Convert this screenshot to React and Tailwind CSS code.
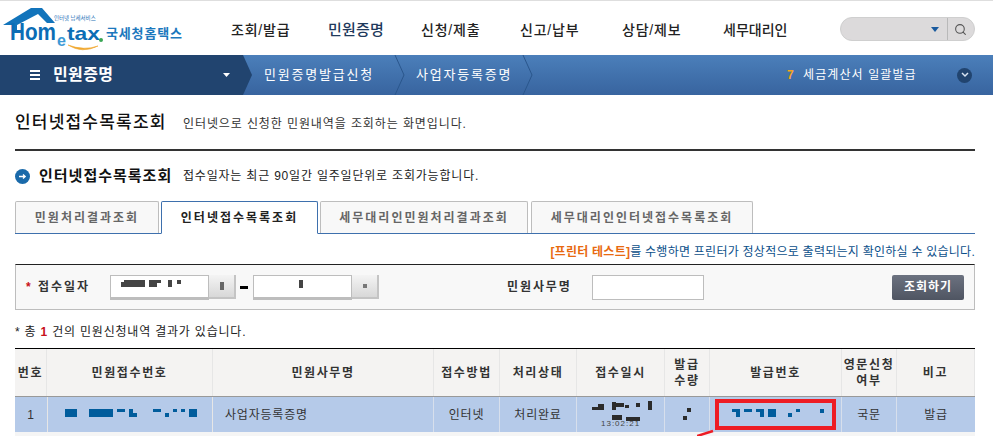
import React from "react";
import { Search } from "lucide-react";

const menus = [
  { label: "조회/발급", width: "w-[97px]", cls: "text-[14px] tracking-[0.8px] text-[#222]" },
  { label: "민원증명", width: "w-[93px]", cls: "text-[15px] tracking-[0.2px] text-[#1f3a5c]" },
  { label: "신청/제출", width: "w-[99px]", cls: "text-[14px] tracking-[0.8px] text-[#222]" },
  { label: "신고/납부", width: "w-[102px]", cls: "text-[14px] tracking-[0.8px] text-[#222]" },
  { label: "상담/제보", width: "w-[101px]", cls: "text-[14px] tracking-[0.8px] text-[#222]" },
  { label: "세무대리인", width: "w-[80px]", cls: "text-[14px] text-[#222]" },
];

const tabs = [
  { label: "민원처리결과조회", width: "w-[144px]" },
  { label: "인터넷접수목록조회", width: "w-[157px]", active: true },
  { label: "세무대리인민원처리결과조회", width: "w-[208px]" },
  { label: "세무대리인인터넷접수목록조회", width: "w-[222px] ml-[1px]" },
];

const headers = [
  ["번호"],
  ["민원접수번호"],
  ["민원사무명"],
  ["접수방법"],
  ["처리상태"],
  ["접수일시"],
  ["발급", "수량"],
  ["발급번호"],
  ["영문신청", "여부"],
  ["비고"],
];

const gridCols =
  "grid grid-cols-[32px_166px_221px_66px_77px_88px_45px_132px_55px_78px]";

// 가려진 번호 부분 (모자이크)
const Mosaic = ({ width, height, fill, blocks, children }) => (
  <svg width={width} height={height} className="block">
    {blocks.map(([x, y, w, h], i) => (
      <rect key={i} x={x} y={y} width={w} height={h} fill={fill} />
    ))}
    {children}
  </svg>
);

const Logo = () => (
  <svg width="190" height="54" className="block shrink-0">
    <path d="M31 7h11l13 15h-8l-9-9-21 11v7h-5v-7H3z" fill="#1274bb" />
    <text x="10" y="39" fontSize="23" fontWeight="700" fill="#0b6db5" fontFamily="Liberation Sans" textLength="46" lengthAdjust="spacingAndGlyphs">Hom</text>
    <text x="57" y="45" fontSize="16" fontWeight="700" fill="#3d9ad6" fontFamily="Liberation Sans">e</text>
    <text x="67" y="39" fontSize="19" fontWeight="700" fill="#0b6db5" fontFamily="Liberation Sans" textLength="33" lengthAdjust="spacingAndGlyphs">tax</text>
    <circle cx="101" cy="39" r="2" fill="#3aa655" />
    <path d="M68 44q14 9 30 1q-14 5-30-1z" fill="#f0a830" stroke="#f0a830" strokeWidth="0.6" />
    <text x="54" y="19" fontSize="5.5" fill="#2b74b8" fontFamily="Noto Sans CJK KR">인터넷 납세서비스</text>
    <text x="106" y="37" fontSize="13" fontWeight="700" fill="#1c78bd" fontFamily="Noto Sans CJK KR" textLength="76">국세청홈택스</text>
  </svg>
);

const Crumb = ({ label, width }) => (
  <div className={`flex items-center justify-between h-full ${width}`}>
    <span className="text-[13px] text-white tracking-[1.8px] whitespace-nowrap">{label}</span>
    <svg width="11" height="40" className="shrink-0">
      <path d="M1 0l9 20-9 20" fill="none" stroke="#2a568c" strokeWidth="1" />
    </svg>
  </div>
);

const CalendarButton = ({ children }) => (
  <div className="w-[27px] h-[24px] border-b-2 border-r-2 border-[#c4c4c4] bg-gradient-to-b from-[#f4f4f4] to-[#d8d8d8] flex items-center justify-center">
    {children}
  </div>
);

const App = () => {
  return (
    <div className="w-[993px] h-[436px] overflow-hidden bg-white text-[12px] text-[#222] font-['Liberation_Sans','Noto_Sans_CJK_KR',sans-serif]">
      <header className="h-[55px] flex items-center border-t border-[#dedede]">
        <Logo />
        <nav className="flex items-center ml-[41px] pt-[5px]">
          {menus.map((menu) => (
            <div
              key={menu.label}
              className={`${menu.width} ${menu.cls} font-medium whitespace-nowrap`}
            >
              {menu.label}
            </div>
          ))}
        </nav>
        <div className="ml-[37px] mt-[2px] w-[135px] h-[24px] flex items-center rounded-full bg-[#dcdadb] border border-[#cfcfcf]">
          <div className="flex-1 flex justify-end pr-[3px]">
            <svg width="8" height="5">
              <path d="M0 0h8l-4 5z" fill="#1a5a9e" />
            </svg>
          </div>
          <div className="w-[27px] h-full ml-[5px] border-l border-[#b9b9b9] flex items-center justify-center pr-[2px]">
            <Search size={13} strokeWidth={2} className="text-[#555]" />
          </div>
        </div>
      </header>

      <div className="h-[40px] flex items-center bg-gradient-to-b from-[#4b7fba] to-[#38649f]">
        <div className="w-[243px] h-full bg-[#21446f] flex items-center pl-[30px] pr-[13px]">
          <div className="w-[10px] flex flex-col gap-[2px]">
            <div className="h-[2px] bg-white" />
            <div className="h-[2px] bg-white" />
            <div className="h-[2px] bg-white" />
          </div>
          <span className="ml-[13px] text-[16px] font-bold text-white tracking-[0.4px]">민원증명</span>
          <svg width="7" height="4" className="ml-auto">
            <path d="M0 0h7l-3.5 4z" fill="#fff" />
          </svg>
        </div>
        <svg width="10" height="40" className="shrink-0">
          <path d="M0 0l9 20-9 20z" fill="#21446f" />
        </svg>
        <div className="ml-[11px]">
          <Crumb label="민원증명발급신청" width="w-[141px]" />
        </div>
        <div className="ml-[11px]">
          <Crumb label="사업자등록증명" width="w-[117px]" />
        </div>
        <span className="ml-[254px] w-[7px] text-[12px] font-bold text-[#f7a51c]">7</span>
        <span className="ml-[9px] w-[112px] text-[12px] text-white tracking-[1.1px] whitespace-nowrap">세금계산서 일괄발급</span>
        <div className="ml-[42px] w-[15px] h-[15px] rounded-full bg-[#21446f] flex items-center justify-center">
          <svg width="8" height="6">
            <path d="M1 1l3 3 3-3" fill="none" stroke="#d7e3f2" strokeWidth="1.5" />
          </svg>
        </div>
      </div>

      <main className="w-[975px] pl-[15px]">
        <div className="h-[56px] pt-[16px] flex items-start border-b-2 border-[#333]">
          <h1 className="text-[17px] leading-[24px] font-medium text-[#111] tracking-[1.2px] w-[168px] whitespace-nowrap">
            인터넷접수목록조회
          </h1>
          <p className="leading-[26px] text-[#333] tracking-[0.9px] whitespace-nowrap">
            인터넷으로 신청한 민원내역을 조회하는 화면입니다.
          </p>
        </div>

        <div className="h-[50px] flex items-center">
          <svg width="15" height="15" className="shrink-0">
            <circle cx="7.5" cy="7.5" r="7.5" fill="#1a6aaa" />
            <path d="M4 7.5h6M8 5.5l2.2 2-2.2 2" fill="none" stroke="#fff" strokeWidth="1.3" />
          </svg>
          <h2 className="ml-[9px] w-[144px] text-[15px] font-bold text-[#111] tracking-[1px] whitespace-nowrap">
            인터넷접수목록조회
          </h2>
          <p className="text-[#222] tracking-[0.8px] whitespace-nowrap">
            접수일자는 최근 90일간 일주일단위로 조회가능합니다.
          </p>
        </div>

        <div className="h-[33px] flex gap-[2px] border-b border-[#3e70ad]">
          {tabs.map((tab) => (
            <div
              key={tab.label}
              className={`${tab.width} rounded-t-[2px] border flex items-center justify-center font-bold tracking-[2px] whitespace-nowrap ${
                tab.active
                  ? "h-[33px] bg-white border-[#3e70ad] border-b-white text-[#222]"
                  : "h-[32px] bg-[#f8f8f8] border-[#bdbdbd] border-b-0 text-[#666]"
              }`}
            >
              {tab.label}
            </div>
          ))}
        </div>

        <p className="h-[30px] pt-[9px] leading-[18px] text-right text-[#0b4f8a] tracking-[0.25px] whitespace-nowrap">
          <span className="font-bold text-[#e8690f]">[프린터 테스트]</span>를 수행하면 프린터가 정상적으로 출력되는지 확인하실 수 있습니다.
        </p>

        <div className="h-[46px] flex items-center bg-[#f8f8f8] border border-[#bdbdbd] border-t-[#222] pl-[10px] pr-[10px]">
          <span className="w-[12px] text-[#c8101a] font-bold">*</span>
          <span className="w-[72px] font-bold tracking-[2px] text-[#333]">접수일자</span>
          <div className="w-[99px] h-[25px] bg-white border border-[#bdbdbd] border-b-[3px] pl-[9px] pt-[4px]">
            <Mosaic width="66" height="9" fill="#444" blocks={[[1, 2, 10, 5], [4, 0, 21, 7], [29, 0, 8, 7], [29, 0, 12, 3], [48, 0, 4, 7], [57, 0, 4, 4]]} />
          </div>
          <CalendarButton>
            <div className="w-[4px] h-[8px] bg-[#666]" />
          </CalendarButton>
          <div className="w-[8px] h-[3px] bg-black ml-[4px] mr-[5px]" />
          <div className="w-[99px] h-[25px] bg-white border border-[#bdbdbd] border-b-[3px] pt-[4px] pl-[45px]">
            <div className="w-[4px] h-[8px] bg-[#444]" />
          </div>
          <CalendarButton>
            <div className="w-[4px] h-[4px] bg-[#777]" />
          </CalendarButton>
          <span className="ml-[128px] w-[85px] font-bold tracking-[1.9px] text-[#333] whitespace-nowrap">민원사무명</span>
          <div className="w-[112px] h-[25px] bg-white border border-[#bdbdbd]" />
          <button className="ml-auto w-[72px] h-[25px] rounded-[2px] bg-gradient-to-b from-[#6c7280] to-[#4f5562] text-white font-bold tracking-[1px]">
            조회하기
          </button>
        </div>

        <p className="h-[38px] pt-[13px] leading-[18px] text-[#222] tracking-[0.8px]">
          * 총 <span className="font-bold text-[#c8101a]">1</span> 건의 민원신청내역 결과가 있습니다.
        </p>

        <div className="relative border-t border-black">
          <div className={`${gridCols} h-[48px] bg-[#f4f3f2] border-b border-[#999]`}>
            {headers.map((lines) => (
              <div
                key={lines[0]}
                className="flex flex-col items-center justify-center border-r border-[#e6e6e6] font-bold text-[#333] tracking-[1.6px] leading-[16px]"
              >
                {lines.map((line) => (
                  <span key={line} className="whitespace-nowrap">{line}</span>
                ))}
              </div>
            ))}
          </div>

          <div className={`${gridCols} h-[35px] bg-[#b5cae9] text-[#333] tracking-[0.8px]`}>
            <div className="flex items-center justify-center">1</div>
            <div className="flex items-center pl-[16px] pb-[2px] border-x border-[#e6e6e6]">
              <Mosaic
                width="134"
                height="9"
                fill="#005c9c"
                blocks={[[1, 0, 12, 8], [25, 0, 24, 8], [25, 5, 3, 3], [53, 0, 8, 3], [65, 0, 4, 4], [65, 4, 8, 4], [89, 0, 8, 3], [101, 4, 4, 4], [109, 0, 4, 3], [117, 0, 4, 3], [125, 0, 8, 8]]}
              />
            </div>
            <div className="flex items-center pl-[12px] border-r border-[#d7dfec]">사업자등록증명</div>
            <div className="flex items-center justify-center border-r border-[#d7dfec]">인터넷</div>
            <div className="flex items-center justify-center border-r border-[#d7dfec]">처리완료</div>
            <div className="flex items-center pl-[14px] border-r border-[#d7dfec]">
              <Mosaic
                width="62"
                height="30"
                fill="#2b2b2b"
                blocks={[[1, 7, 12, 3], [7, 4, 6, 3], [21, 2, 4, 8], [25, 3, 8, 4], [34, 5, 4, 3], [45, 3, 4, 4], [57, 1, 4, 9], [21, 15, 10, 5], [35, 17, 14, 4]]}
              >
                <text x="10" y="26" fontSize="8" fill="#444" fontFamily="Liberation Sans" letterSpacing="1">13:02:21</text>
              </Mosaic>
            </div>
            <div className="flex items-center justify-center border-r border-[#d7dfec]">
              <Mosaic width="10" height="14" fill="#2b2b2b" blocks={[[5, 0, 4, 4], [1, 8, 4, 4]]} />
            </div>
            <div className="flex items-center pl-[22px] border-r border-[#d7dfec] pb-[3px]">
              <Mosaic
                width="95"
                height="8"
                fill="#005c9c"
                blocks={[[0, 0, 8, 3], [4, 3, 4, 5], [12, 0, 8, 3], [24, 0, 8, 3], [28, 3, 4, 5], [36, 0, 8, 8], [56, 4, 4, 4], [64, 0, 4, 3], [88, 0, 4, 4]]}
              />
            </div>
            <div className="flex items-center justify-center border-r border-[#d7dfec]">국문</div>
            <div className="flex items-center justify-center">발급</div>
          </div>

          <div className="h-[4px] bg-[#f5f5f5]" />

          {/* 발급번호 강조 표시 */}
          <div className="absolute left-[700px] top-[50px] w-[121px] h-[31px] border-[4px] border-[#ed1c24]" />
          <svg width="20" height="8" className="absolute left-[682px] top-[80px]">
            <path d="M0 7l16-5" stroke="#ed1c24" strokeWidth="2.5" fill="none" />
          </svg>
        </div>
      </main>
    </div>
  );
};

export default App;
